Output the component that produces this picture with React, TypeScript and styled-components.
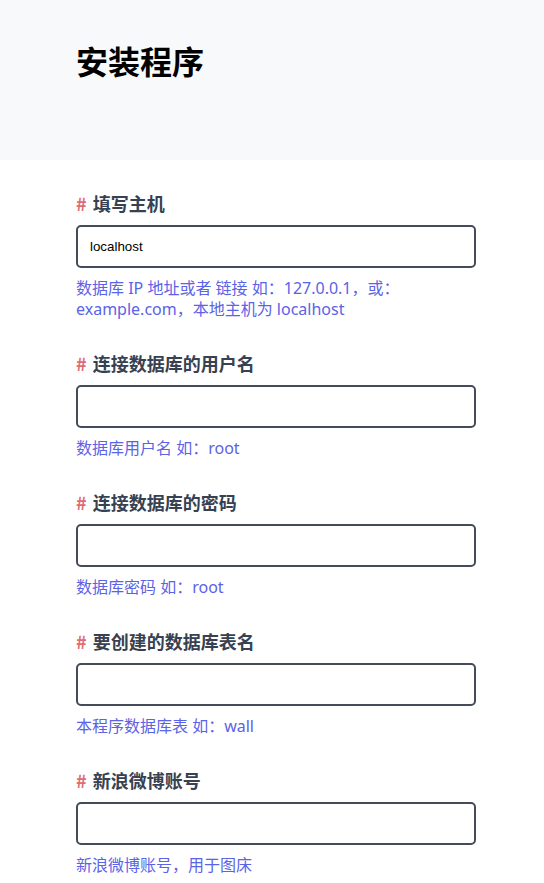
import React from 'react';
import styled, { createGlobalStyle } from 'styled-components';

const GlobalStyle = createGlobalStyle`
  body {
    margin: 0;
    background: #ffffff;
    font-family: "Noto Sans", "Noto Sans CJK SC", sans-serif;
  }
`;

const fields = [
  { label: '填写主机', value: 'localhost', help: '数据库 IP 地址或者 链接 如：127.0.0.1，或：example.com，本地主机为 localhost' },
  { label: '连接数据库的用户名', value: '', help: '数据库用户名 如：root' },
  { label: '连接数据库的密码', value: '', help: '数据库密码 如：root' },
  { label: '要创建的数据库表名', value: '', help: '本程序数据库表 如：wall' },
  { label: '新浪微博账号', value: '', help: '新浪微博账号，用于图床' },
];

const App = () => {
  return (
    <>
      <GlobalStyle />
      <Header>
        <Title>安装程序</Title>
      </Header>
      <Main>
        {fields.map((f) => (
          <Field key={f.label}>
            <Label><Hash>#</Hash> {f.label}</Label>
            <Input type='text' defaultValue={f.value} />
            <Help>{f.help}</Help>
          </Field>
        ))}
      </Main>
    </>
  );
};

const Header = styled.header`
  height: 160px;
  box-sizing: border-box;
  padding: 40px 76px 0;
  background-color: #f8f9fb;
`;

const Title = styled.h1`
  margin: 0;
  font-family: "Noto Sans CJK SC", sans-serif;
  font-size: 32px;
  line-height: 40px;
  font-weight: 700;
  color: #000000;
`;

const Main = styled.main`
  display: flex;
  flex-direction: column;
  gap: 29px;
  padding: 29px 68px 40px 76px;
  width: 400px;
`;

const Field = styled.div`
  display: flex;
  flex-direction: column;
`;

const Label = styled.label`
  font-family: "Noto Sans CJK SC", sans-serif;
  font-size: 18px;
  line-height: 28px;
  font-weight: 700;
  color: #374151;
  margin-bottom: 8px;
`;

const Hash = styled.span`
  color: #e06c75;
  margin-right: 2px;
`;

const Input = styled.input`
  box-sizing: border-box;
  width: 400px;
  height: 43px;
  padding: 0 12px;
  border: 2px solid #454c59;
  border-radius: 5px;
  font-family: "Liberation Sans", Arial, sans-serif;
  font-size: 13.33px;
  color: #000000;
  background: #ffffff;
  outline: none;
`;

const Help = styled.p`
  margin: 10px 0 0;
  font-size: 16px;
  line-height: 21px;
  color: #5b63e6;
`;

export default App;
